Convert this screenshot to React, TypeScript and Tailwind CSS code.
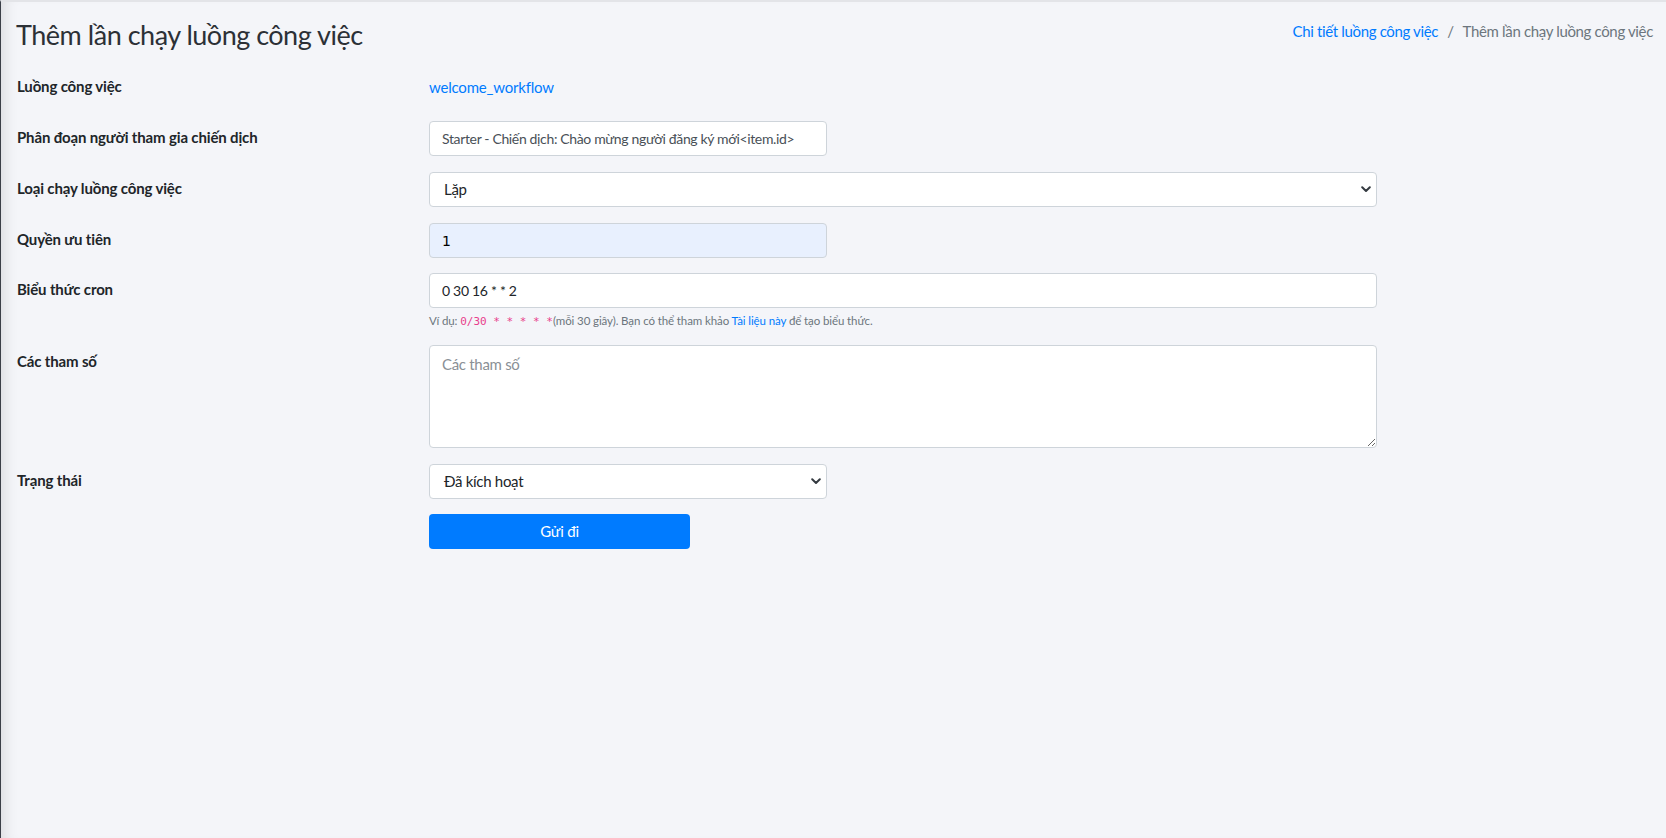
import React from "react";

const font = { fontFamily: "Lato, Roboto, 'Noto Sans', sans-serif" };

function Chevron() {
  return (
    <svg width="10" height="7" viewBox="0 0 10 7" className="shrink-0">
      <path d="M1.2 1.3 L5 5 L8.8 1.3" fill="none" stroke="#343a40" strokeWidth="2" strokeLinecap="round" strokeLinejoin="round" />
    </svg>
  );
}

function Label({ children }: { children: React.ReactNode }) {
  return (
    <div className="w-[428px] shrink-0 pl-[16px] leading-[33px] text-[15px] tracking-[-0.15px] font-bold text-[#212529]">{children}</div>
  );
}

function SelectBox({ value, wide }: { value: string; wide?: boolean }) {
  return (
    <div
      className={`${wide ? "w-[948px]" : "w-[398px]"} h-[35px] bg-white border border-[#ced4da] rounded-[4px] flex items-center justify-between pl-[14px] pr-[5px] text-[15px] tracking-[-0.3px] text-[#212529]`}
    >
      <span>{value}</span>
      <Chevron />
    </div>
  );
}

export default function App() {
  return (
    <div
      className="min-h-[838px] w-full bg-[#f4f5f9] border-t-2 border-[#e3e4e8] border-l border-l-[#3b3f48] shadow-[inset_14px_0_14px_-10px_rgba(0,0,0,0.10)]"
      style={font}
    >
      <div className="flex items-start justify-between pt-[16px] pl-[15px] pr-[13px]">
        <h1 className="text-[27px] leading-[34px] tracking-[-0.5px] font-normal text-[#2c3036]">Thêm lần chạy luồng công việc</h1>
        <div className="flex items-center text-[15px] tracking-[-0.35px] leading-[24px] pt-[1px]">
          <span className="text-[#007bff]">Chi tiết luồng công việc</span>
          <span className="text-[#6c757d] px-[9px]">/</span>
          <span className="text-[#6c757d]">Thêm lần chạy luồng công việc</span>
        </div>
      </div>

      <div className="mt-[18px] flex flex-col">
        <div className="flex items-start mb-[16px]">
          <Label>Luồng công việc</Label>
          <div className="leading-[35px] text-[15px] tracking-[-0.2px] text-[#007bff]">welcome_workflow</div>
        </div>

        <div className="flex items-start mb-[16px]">
          <Label>Phân đoạn người tham gia chiến dịch</Label>
          <input
            readOnly
            value="Starter - Chiến dịch: Chào mừng người đăng ký mới<item.id>"
            className="w-[398px] h-[35px] bg-white border border-[#ced4da] rounded-[4px] px-[12px] text-[14px] tracking-[-0.35px] text-[#495057] outline-none"
            style={font}
          />
        </div>

        <div className="flex items-start mb-[16px]">
          <Label>Loại chạy luồng công việc</Label>
          <SelectBox value="Lặp" wide />
        </div>

        <div className="flex items-start mb-[15px]">
          <Label>Quyền ưu tiên</Label>
          <input
            readOnly
            value="1"
            className="w-[398px] h-[35px] bg-[#e8f0fe] border border-[#ced4da] rounded-[4px] px-[12px] text-[14px] text-black outline-none"
            style={{ fontFamily: "'DejaVu Sans', sans-serif" }}
          />
        </div>

        <div className="flex items-start mb-[14px]">
          <Label>Biểu thức cron</Label>
          <div className="flex flex-col">
            <input
              readOnly
              value="0 30 16 * * 2"
              className="w-[948px] h-[35px] bg-white border border-[#ced4da] rounded-[4px] px-[12px] text-[14px] tracking-[-0.3px] text-[#212529] outline-none"
              style={font}
            />
            <div className="mt-[4px] text-[11.5px] tracking-[-0.1px] leading-[18px] text-[#6c757d]">
              Ví dụ:{" "}
              <code className="text-[#e83e8c] text-[11px] tracking-normal" style={{ fontFamily: "'DejaVu Sans Mono', 'Liberation Mono', monospace" }}>
                0/30 * * * * *
              </code>
              (mỗi 30 giây). Bạn có thể tham khảo <span className="text-[#007bff]">Tài liệu này</span> để tạo biểu thức.
            </div>
          </div>
        </div>

        <div className="flex items-start mb-[16px]">
          <Label>Các tham số</Label>
          <textarea
            readOnly
            placeholder="Các tham số"
            className="w-[948px] h-[103px] bg-white border border-[#ced4da] rounded-[4px] px-[12px] py-[6px] text-[15px] tracking-[-0.3px] leading-[24px] text-[#212529] placeholder:text-[#8a9096] outline-none"
            style={font}
          />
        </div>

        <div className="flex items-start mb-[15px]">
          <Label>Trạng thái</Label>
          <SelectBox value="Đã kích hoạt" />
        </div>

        <div className="flex items-start">
          <div className="w-[428px] shrink-0" />
          <button className="w-[261px] h-[35px] bg-[#007bff] rounded-[4px] text-white text-[15px] tracking-[-0.2px]">Gửi đi</button>
        </div>
      </div>
    </div>
  );
}
